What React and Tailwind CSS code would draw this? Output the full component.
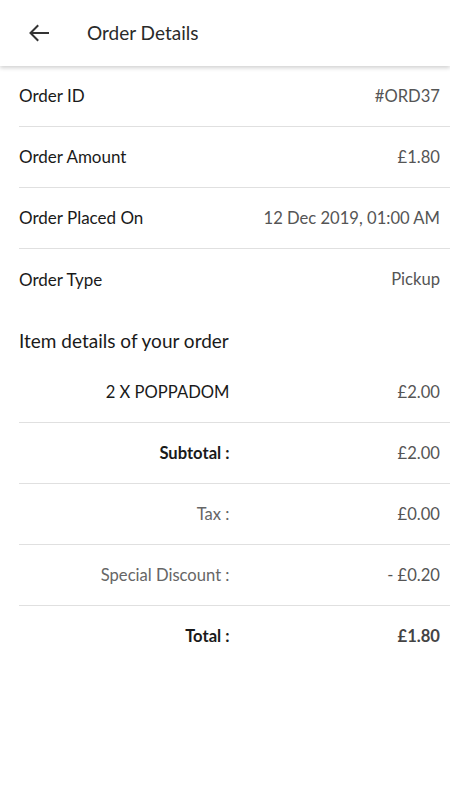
const info = [
  { label: 'Order ID', value: '#ORD37' },
  { label: 'Order Amount', value: '£1.80' },
  { label: 'Order Placed On', value: '12 Dec 2019, 01:00 AM' },
  { label: 'Order Type', value: 'Pickup' },
]

const summary = [
  { label: '2 X POPPADOM', value: '£2.00', labelCls: 'text-[#1a1a1a]', valueCls: 'text-[#555]' },
  { label: 'Subtotal :', value: '£2.00', labelCls: 'font-bold text-[#1a1a1a]', valueCls: 'text-[#555]' },
  { label: 'Tax :', value: '£0.00', labelCls: 'text-[#666]', valueCls: 'text-[#555]' },
  { label: 'Special Discount :', value: '- £0.20', labelCls: 'text-[#666]', valueCls: 'text-[#555]' },
  { label: 'Total :', value: '£1.80', labelCls: 'font-bold text-[#1a1a1a]', valueCls: 'font-bold text-[#444]' },
]

export default function App() {
  return (
    <div className="w-[450px] min-h-[800px] bg-white font-['Lato','Noto_Sans',sans-serif]">
      <header className="h-[66px] flex items-center shadow-[0_2px_4px_rgba(0,0,0,0.18)] relative z-10">
        <button className="w-[76px] pl-[28px] flex items-center">
          <svg width="22" height="18" viewBox="0 0 22 18" fill="none" stroke="#333" strokeWidth="2" strokeLinecap="square">
            <path d="M20 9H3" />
            <path d="M9.5 2L2.5 9l7 7" />
          </svg>
        </button>
        <h1 className="ml-[11px] text-[19px] text-[#2a2a2a]">Order Details</h1>
      </header>

      <div className="pl-[19px]">
        {info.map((r, i) => (
          <div key={r.label} className={`flex items-center justify-between h-[61px] pr-[10px] ${i < info.length - 1 ? 'border-b border-[#e0e0e0]' : ''}`}>
            <span className="text-[17px] text-[#1a1a1a]">{r.label}</span>
            <span className="text-[16.6px] text-[#555]">{r.value}</span>
          </div>
        ))}

        <h2 className="text-[19px] leading-[27px] text-[#1a1a1a] mt-[17px] mb-[8px]">Item details of your order</h2>

        {summary.map((r, i) => (
          <div key={r.label} className={`grid grid-cols-2 items-center h-[61px] pr-[10px] ${i < summary.length - 1 ? 'border-b border-[#e0e0e0]' : ''}`}>
            <span className={`text-right text-[16.6px] ${r.labelCls}`}>{r.label}</span>
            <span className={`text-right text-[16.6px] ${r.valueCls}`}>{r.value}</span>
          </div>
        ))}
      </div>
    </div>
  )
}
